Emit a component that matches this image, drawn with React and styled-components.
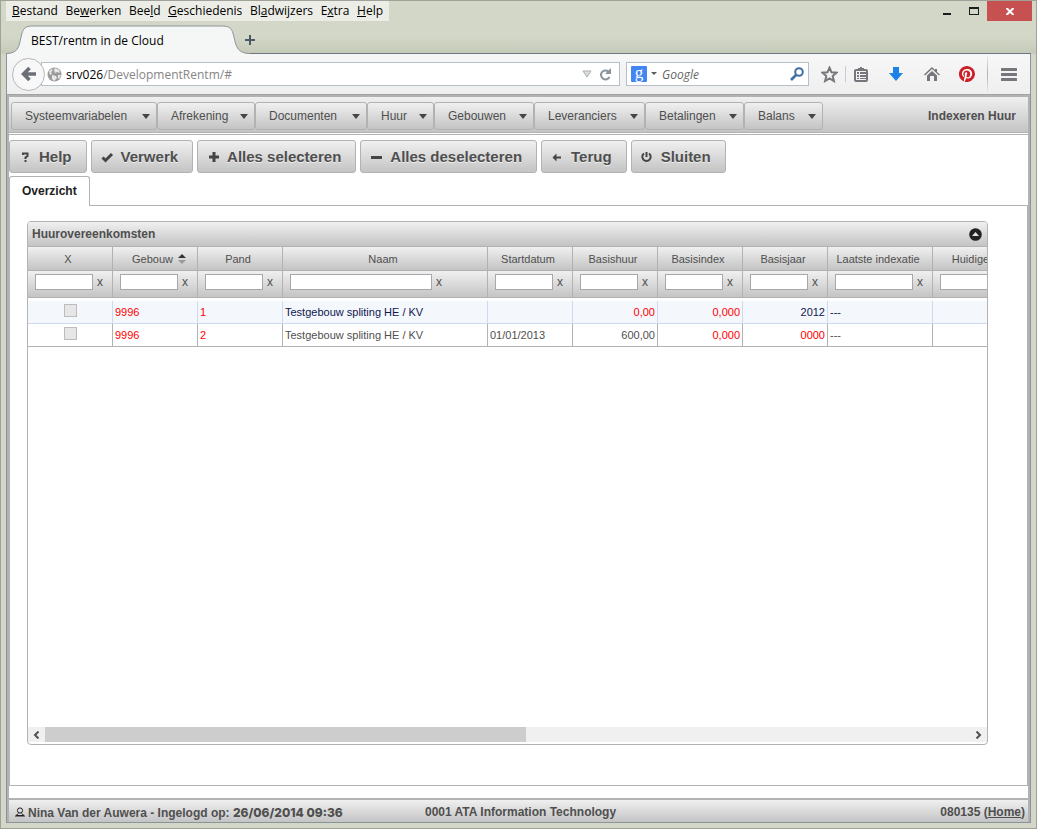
import React, { useState } from 'react'
import styled, { createGlobalStyle, css } from 'styled-components'

const GlobalStyle = createGlobalStyle`
  * {
    box-sizing: border-box;
  }

  body {
    margin: 0;
    background: #d3d7c7;
    font-family: "Liberation Sans", Arial, sans-serif;
    font-size: 11px;
    color: #4f4f4f;
  }

  button,
  input {
    font: inherit;
    color: inherit;
  }
`

const chromeFont = css`
  font-family: "Open Sans", "Noto Sans", sans-serif;
  font-size: 12px;
  color: #000;
`

const metal = css`
  background: linear-gradient(#f0f0f0, #c4c4c4);
`

/* browser window */

const BrowserWindow = styled.div`
  display: flex;
  flex-direction: column;
  min-height: 100vh;
  padding: 0 4px 5px 5px;
  border: 1px solid #a0a297;
  background: linear-gradient(#d3d7c7 36px, #c6cab9 52px, #d3d7c7 54px);
`

const TitleBar = styled.div`
  display: flex;
  align-items: flex-start;
  justify-content: space-between;
  height: 24px;
`

const MenuBar = styled.nav`
  ${chromeFont}
  display: flex;
  justify-content: space-between;
  width: 383px;
  height: 20px;
  padding: 0 6px;
  background: #ecede6;
`

const MenuBarItem = styled.button`
  padding: 0;
  border: 0;
  background: none;
  line-height: 20px;
`

const WindowControls = styled.div`
  display: flex;
  height: 20px;
`

const WindowButton = styled.button`
  display: flex;
  align-items: center;
  justify-content: center;
  width: ${props => (props.$close ? 45 : 27)}px;
  padding: 0;
  border: 0;
  background: ${props => (props.$close ? '#c75050' : 'none')};
`

const TabStrip = styled.div`
  display: flex;
  height: 29px;
  margin-right: 1px;
  border-bottom: 1px solid #6b7a83;
`

const BrowserTab = styled.button`
  ${chromeFont}
  position: relative;
  width: 244px;
  height: 29px;
  padding: 2px 25px 0;
  border: 0;
  background: none;
  text-align: left;

  svg {
    position: absolute;
    top: 0;
    left: 0;
  }

  span {
    position: relative;
  }
`

const NewTab = styled.button`
  width: 16px;
  margin-left: -8px;
  padding: 4px 0 0;
  border: 0;
  background: none;
`

const BrowserBody = styled.div`
  display: flex;
  flex: 1;
  flex-direction: column;
  margin-right: 1px;
  border: 1px solid #8a9499;
  border-top: 0;
  background: #fff;
`

const NavBar = styled.div`
  display: flex;
  align-items: center;
  height: 41px;
  padding: 0 1px 0 5px;
  border-bottom: 1px solid #a3a3a3;
  background: linear-gradient(#f7f7f7, #efefef);
`

const BackButton = styled.button`
  z-index: 1;
  display: flex;
  align-items: center;
  justify-content: center;
  width: 33px;
  height: 33px;
  padding: 0;
  border: 1px solid #b3b8bc;
  border-radius: 50%;
  background: #f8f8f8;
`

const Field = styled.div`
  ${chromeFont}
  display: flex;
  align-items: center;
  height: 24px;
  border: 1px solid #b4bfc6;
  background: #fff;

  input {
    flex: 1;
    min-width: 0;
    padding: 0;
    border: 0;
    outline: 0;
    background: none;
    color: #858585;
  }
`

const AddressField = styled(Field)`
  flex: 1;
  margin-left: -4px;
  padding: 0 0 0 5px;

  svg:first-child {
    margin-right: 4px;
  }
`

const SearchField = styled(Field)`
  width: 183px;
  margin: 0 5px 0 6px;
  padding: 0 4px;

  input {
    margin-left: 3px;
    color: #666;
    font-style: italic;
  }

  input::placeholder {
    color: #666;
    opacity: 1;
  }
`

const PlainButton = styled.button`
  display: flex;
  align-items: center;
  justify-content: center;
  padding: 0;
  border: 0;
  background: none;
`

const NavTools = styled.div`
  display: flex;
  align-items: center;
`

const ToolButton = styled(PlainButton)`
  width: ${props => props.$width || 36}px;
  height: 24px;
`

const Separator = styled.span`
  width: 1px;
  height: ${props => (props.$tall ? 36 : 16)}px;
  background: ${props =>
    props.$tall ? 'linear-gradient(#e8eaeb, #a9b3b9, #e8eaeb)' : '#c4ccd1'};
`

/* application */

const Page = styled.div`
  display: flex;
  flex: 1;
  flex-direction: column;
  border: 2px solid #b2b2b2;
  border-bottom: 0;
`

const AppHeader = styled.header`
  ${metal}
  display: flex;
  align-items: center;
  justify-content: space-between;
  height: 36px;
  padding: 3px 12px 0 2px;
  border-bottom: 1px solid #b2b2b2;
  font-size: 12px;
`

const AppMenu = styled.nav`
  display: flex;
`

const AppMenuItem = styled.button`
  ${metal}
  display: flex;
  align-items: center;
  justify-content: space-between;
  width: ${props => props.$width}px;
  height: 28px;
  padding: 0 6px 0 13px;
  border: 1px solid #b2b2b2;
  border-radius: 3px;
`

const PageTitle = styled.h1`
  margin: 0;
  font-size: 12px;
`

const Main = styled.main`
  display: flex;
  flex: 1;
  flex-direction: column;
  margin-top: 1px;
  border-top: 1px solid #b2b2b2;
`

const Toolbar = styled.div`
  display: flex;
  gap: 4px;
  padding: 5px 0 3px;
`

const ToolbarButton = styled.button`
  ${metal}
  display: flex;
  align-items: center;
  gap: 7px;
  height: 33px;
  padding: 0 14px 0 8px;
  border: 1px solid #b2b2b2;
  border-radius: 3px;
  font-size: 15px;
  font-weight: bold;
  text-shadow: 0 1px 0 #eee;
`

const Tabs = styled.div`
  display: flex;
  height: 30px;
  border-bottom: 1px solid #b2b2b2;
`

const Tab = styled.button`
  height: 30px;
  padding: 0 12px 2px;
  border: 1px solid #b2b2b2;
  border-bottom: 0;
  border-radius: 3px 3px 0 0;
  background: #fff;
  color: #212121;
  font-size: 12px;
  font-weight: bold;
`

const TabPanel = styled.section`
  display: flex;
  flex: 1;
  flex-direction: column;
  padding: 15px 39px 40px 17px;
  border: 1px solid #b2b2b2;
  border-top: 0;
`

const GridPanel = styled.div`
  display: flex;
  flex: 1;
  flex-direction: column;
  overflow: hidden;
  border: 1px solid #b2b2b2;
  border-radius: 4px;
`

const GridTitle = styled.div`
  ${metal}
  display: flex;
  align-items: center;
  justify-content: space-between;
  height: 25px;
  padding: 0 5px 0 4px;
  border-bottom: 1px solid #b2b2b2;

  h2 {
    margin: 0;
    font-size: 12px;
  }
`

const GridViewport = styled.div`
  flex: 1;
  overflow: hidden;
`

const Table = styled.table`
  width: 1010px;
  border-collapse: separate;
  border-spacing: 0;
  table-layout: fixed;
`

const HeadCell = styled.th`
  ${metal}
  height: 24px;
  padding: 0 4px 0 0;
  border: solid #b2b2b2;
  border-width: 0 1px 1px 0;
  font-weight: normal;
`

const HeadLabel = styled.span`
  display: flex;
  align-items: center;
  justify-content: center;
  gap: 5px;
  padding-left: ${props => (props.$sorted ? 12 : 0)}px;
  white-space: nowrap;
`

const FilterCell = styled.td`
  ${metal}
  height: 27px;
  padding: 0 5px 4px 7px;
  border: solid #b2b2b2;
  border-width: 0 1px 1px 0;
`

const Filter = styled.div`
  display: flex;
  align-items: center;

  input {
    width: ${props => props.$width}px;
    height: 16px;
    padding: 0 2px;
    border: 1px solid #a6a6ac;
    background: #fff;
  }

  button {
    width: 14px;
    padding: 0;
    border: 0;
    background: none;
    font-size: 12px;
    line-height: 16px;
  }
`

const BodyRow = styled.tr`
  td {
    height: 23px;
    padding: 0 2px;
    border: solid ${props => (props.$active ? '#cfdaf0' : '#b2b2b2')};
    border-width: 0 1px 1px 0;
    background: ${props => (props.$active ? '#f4f8fd' : '#fff')};
    color: ${props => (props.$active ? '#0f1650' : '#4f4f4f')};
    white-space: nowrap;
  }
`

const Value = styled.div`
  color: ${props => (props.$alert ? '#f00' : 'inherit')};
  text-align: ${props => props.$align || 'left'};
`

const Checkbox = styled.input.attrs({ type: 'checkbox' })`
  display: block;
  appearance: none;
  width: 13px;
  height: 13px;
  margin: 0 auto 4px;
  border: 1px solid #bcbcbc;
  background: #e6e6e6;
`

const Spacer = styled.tbody`
  td {
    height: 3px;
    padding: 0;
  }
`

const ScrollBar = styled.div`
  display: flex;
  height: 15px;
  margin-bottom: 2px;
  background: #f0f0f0;
`

const ScrollTrack = styled.div`
  flex: 1;
`

const ScrollThumb = styled.div`
  width: 52%;
  height: 15px;
  background: #cdcdcd;
`

const ScrollButton = styled(PlainButton)`
  width: 17px;
`

const StatusBar = styled.footer`
  ${metal}
  display: grid;
  grid-template-columns: 410px 1fr auto;
  align-items: center;
  height: 24px;
  margin-top: 12px;
  padding: 2px 3px 0 6px;
  border-top: 2px solid #b2b2b2;
  font-size: 12px;
  font-weight: bold;

  a {
    color: inherit;
  }
`

const User = styled.span`
  display: flex;
  align-items: center;
  gap: 3px;
  white-space: pre;
`

const LoginTime = styled.time`
  font-family: Inter, sans-serif;
  font-weight: 800;
`

const Caret = () => (
  <svg width="8" height="5" viewBox="0 0 8 5">
    <path d="M0 0h8L4 5z" fill="#454545" />
  </svg>
)

const toolbarIcons = {
  help: (
    <path
      d="M5 6V4.500h4.500V7L7.500 8.500V10M7.500 11v2"
      fill="none"
      stroke="#454545"
      strokeWidth="2"
    />
  ),
  check: <path d="M2.500 8.500l3 3 6.500-6.500" fill="none" stroke="#454545" strokeWidth="3" />,
  plus: <path d="M8 3v10M3 8h10" fill="none" stroke="#454545" strokeWidth="3" />,
  minus: <path d="M2 8.500h11" fill="none" stroke="#454545" strokeWidth="3" />,
  back: <path d="M6.500 4.500L2.500 8.500l4 4V9.500H11v-2H6.500z" fill="#454545" />,
  power: (
    <path d="M4 4.500a4.200 4.200 0 1 0 5 0M6.500 3v5" fill="none" stroke="#454545" strokeWidth="2" />
  ),
}

const ToolbarIcon = ({ name }) => (
  <svg width="14" height="16" viewBox="0 0 14 16">
    {toolbarIcons[name]}
  </svg>
)

const menuBarItems = [
  ['', 'B', 'estand'],
  ['Be', 'w', 'erken'],
  ['Bee', 'l', 'd'],
  ['', 'G', 'eschiedenis'],
  ['Bl', 'a', 'dwijzers'],
  ['E', 'x', 'tra'],
  ['', 'H', 'elp'],
]

const appMenuItems = [
  { label: 'Systeemvariabelen', width: 146 },
  { label: 'Afrekening', width: 98 },
  { label: 'Documenten', width: 112 },
  { label: 'Huur', width: 67 },
  { label: 'Gebouwen', width: 100 },
  { label: 'Leveranciers', width: 111 },
  { label: 'Betalingen', width: 99 },
  { label: 'Balans', width: 79 },
]

const actions = [
  { label: 'Help', icon: 'help' },
  { label: 'Verwerk', icon: 'check' },
  { label: 'Alles selecteren', icon: 'plus' },
  { label: 'Alles deselecteren', icon: 'minus' },
  { label: 'Terug', icon: 'back' },
  { label: 'Sluiten', icon: 'power' },
]

const columns = [
  { key: 'x', label: 'X', width: 85 },
  { key: 'gebouw', label: 'Gebouw', width: 85, sorted: true },
  { key: 'pand', label: 'Pand', width: 85 },
  { key: 'naam', label: 'Naam', width: 205, filter: 142 },
  { key: 'start', label: 'Startdatum', width: 85 },
  { key: 'huur', label: 'Basishuur', width: 85, align: 'right' },
  { key: 'index', label: 'Basisindex', width: 85, align: 'right' },
  { key: 'jaar', label: 'Basisjaar', width: 85, align: 'right' },
  { key: 'laatste', label: 'Laatste indexatie', width: 105, filter: 78 },
  { key: 'huidige', label: 'Huidige huur', width: 105, filter: 78 },
]

const rows = [
  {
    gebouw: '9996',
    pand: '1',
    naam: 'Testgebouw spliting HE / KV',
    start: '',
    huur: '0,00',
    index: '0,000',
    jaar: '2012',
    laatste: '---',
    alerts: ['gebouw', 'pand', 'huur', 'index'],
  },
  {
    gebouw: '9996',
    pand: '2',
    naam: 'Testgebouw spliting HE / KV',
    start: '01/01/2013',
    huur: '600,00',
    index: '0,000',
    jaar: '0000',
    laatste: '---',
    alerts: ['gebouw', 'pand', 'index', 'jaar'],
  },
]

const Grid = () => {
  const [open, setOpen] = useState(true)

  return (
    <GridPanel>
      <GridTitle>
        <h2>Huurovereenkomsten</h2>
        <PlainButton aria-label="Inklappen" onClick={() => setOpen(!open)}>
          <svg width="13" height="13" viewBox="0 0 13 13">
            <circle cx="6.500" cy="6.500" r="6.300" fill="#222" />
            <path d="M3 8l3.500-4L10 8z" fill="#e4e4e4" />
          </svg>
        </PlainButton>
      </GridTitle>
      <GridViewport>
        {open && (
          <Table>
            <colgroup>
              {columns.map(col => (
                <col key={col.key} style={{ width: col.width }} />
              ))}
            </colgroup>
            <thead>
              <tr>
                {columns.map(col => (
                  <HeadCell key={col.key} scope="col">
                    <HeadLabel $sorted={col.sorted}>
                      {col.label}
                      {col.sorted && (
                        <svg width="8" height="10" viewBox="0 0 8 10">
                          <path d="M0 4l4-4 4 4z" fill="#333" />
                          <path d="M0 6h8l-4 4z" fill="#999" />
                        </svg>
                      )}
                    </HeadLabel>
                  </HeadCell>
                ))}
              </tr>
              <tr>
                {columns.map(col => (
                  <FilterCell key={col.key}>
                    <Filter $width={col.filter || 58}>
                      <input type="text" aria-label={`Filter ${col.label}`} />
                      <button aria-label={`Wis ${col.label}`}>x</button>
                    </Filter>
                  </FilterCell>
                ))}
              </tr>
            </thead>
            <Spacer>
              <tr>
                <td colSpan={columns.length} />
              </tr>
            </Spacer>
            <tbody>
              {rows.map((row, i) => (
                <BodyRow key={row.pand} $active={i === 0}>
                  {columns.map(col => (
                    <td key={col.key}>
                      {col.key === 'x' ? (
                        <Checkbox aria-label={`Selecteer pand ${row.pand}`} />
                      ) : (
                        <Value $align={col.align} $alert={row.alerts.includes(col.key)}>
                          {row[col.key]}
                        </Value>
                      )}
                    </td>
                  ))}
                </BodyRow>
              ))}
            </tbody>
          </Table>
        )}
      </GridViewport>
      <ScrollBar>
        <ScrollButton aria-label="Naar links">
          <svg width="7" height="8" viewBox="0 0 7 8">
            <path d="M5.500 0.500L2 4l3.500 3.500" fill="none" stroke="#505050" strokeWidth="2" />
          </svg>
        </ScrollButton>
        <ScrollTrack>
          <ScrollThumb />
        </ScrollTrack>
        <ScrollButton aria-label="Naar rechts">
          <svg width="7" height="8" viewBox="0 0 7 8">
            <path d="M1.500 0.500L5 4 1.500 7.500" fill="none" stroke="#505050" strokeWidth="2" />
          </svg>
        </ScrollButton>
      </ScrollBar>
    </GridPanel>
  )
}

const BrowserChrome = () => (
  <>
    <TitleBar>
      <MenuBar>
        {menuBarItems.map(([before, key, after]) => (
          <MenuBarItem key={before + key + after}>
            {before}
            <u>{key}</u>
            {after}
          </MenuBarItem>
        ))}
      </MenuBar>
      <WindowControls>
        <WindowButton aria-label="Minimaliseren">
          <svg width="10" height="10" viewBox="0 0 10 10">
            <path d="M1 7h8v2H1z" fill="#1b1b1b" />
          </svg>
        </WindowButton>
        <WindowButton aria-label="Maximaliseren">
          <svg width="10" height="8" viewBox="0 0 10 8">
            <path d="M0 0h10v8H0zM1 2v5h8V2z" fill="#1b1b1b" fillRule="evenodd" />
          </svg>
        </WindowButton>
        <WindowButton $close aria-label="Sluiten">
          <svg width="8" height="7" viewBox="0 0 8 7">
            <path d="M.5 0l7 7M7.500 0l-7 7" stroke="#fff" strokeWidth="2" />
          </svg>
        </WindowButton>
      </WindowControls>
    </TitleBar>
    <TabStrip>
      <BrowserTab>
        <svg width="244" height="29" viewBox="0 0 244 29">
          <path
            d="M0 28.500C12 28.500 13 22 15 12C17 3 19 1 27 1H215C224 1 226 3 228 12C230 22 232 28.500 244 28.500V29H0z"
            fill="#f5f6f6"
          />
          <path
            d="M0 28.500C12 28.500 13 22 15 12C17 3 19 1 27 1H215C224 1 226 3 228 12C230 22 232 28.500 244 28.500"
            fill="none"
            stroke="#8d969a"
          />
        </svg>
        <span>BEST/rentm in de Cloud</span>
      </BrowserTab>
      <NewTab aria-label="Nieuw tabblad">
        <svg width="10" height="10" viewBox="0 0 10 10">
          <path d="M5 0v10M0 5h10" stroke="#4a5a66" strokeWidth="2" />
        </svg>
      </NewTab>
    </TabStrip>
  </>
)

const Navigation = () => (
  <NavBar>
    <BackButton aria-label="Terug">
      <svg width="16" height="16" viewBox="0 0 16 16">
        <path d="M8.500 2L2.500 8l6 6M3 8h12" fill="none" stroke="#6b7078" strokeWidth="3.600" />
      </svg>
    </BackButton>
    <AddressField>
      <svg width="15" height="15" viewBox="0 0 15 15">
        <circle cx="7.500" cy="7.500" r="7" fill="#9b9b9b" />
        <path d="M2 4l3-2 1 1-2 2 1 2-2 1zM8 1l4 2 1 3-3-1-2 1-1-3zM5 8l4 1 1 2-3 3-2-2zM11 8l3 0-2 4-1-1z" fill="#e8e8e8" />
      </svg>
      <span>srv026</span>
      <input type="text" aria-label="Adres" defaultValue="/DevelopmentRentm/#" />
      <PlainButton aria-label="Geschiedenis tonen">
        <svg width="10" height="8" viewBox="0 0 10 8">
          <path d="M1 1h8L5 7z" fill="#d9dde0" stroke="#a7afb5" />
        </svg>
      </PlainButton>
      <ToolButton $width={23} aria-label="Vernieuwen">
        <svg width="13" height="13" viewBox="0 0 13 13">
          <path d="M9.500 3.500A4.500 4.500 0 1 0 10.500 9" fill="none" stroke="#8a949c" strokeWidth="2" />
          <path d="M12 0v6H6z" fill="#8a949c" />
        </svg>
      </ToolButton>
    </AddressField>
    <SearchField>
      <svg width="16" height="16" viewBox="0 0 16 16">
        <rect width="16" height="16" rx="1" fill="#4285f4" />
        <text x="8" y="12" fill="#fff" fontFamily="Liberation Serif" fontSize="17" textAnchor="middle">
          g
        </text>
      </svg>
      <svg width="12" height="4" viewBox="0 0 12 4">
        <path d="M4 0h6L7 3z" fill="#5c5c5c" />
      </svg>
      <input type="text" aria-label="Zoeken" placeholder="Google" />
      <PlainButton aria-label="Zoek">
        <svg width="14" height="14" viewBox="0 0 14 14">
          <circle cx="9" cy="5" r="3.800" fill="none" stroke="#3f6fa5" strokeWidth="2" />
          <path d="M6 8l-5 5" stroke="#3f6fa5" strokeWidth="2.600" />
        </svg>
      </PlainButton>
    </SearchField>
    <NavTools>
      <ToolButton $width={31} aria-label="Bladwijzer maken">
        <svg width="17" height="17" viewBox="0 0 17 17">
          <path
            d="M8.500 1.600l2 4.700 5 .4-3.800 3.300 1.200 5-4.400-2.700L4.100 15l1.200-5L1.500 6.700l5-.4z"
            fill="none"
            stroke="#75777c"
            strokeWidth="2"
          />
        </svg>
      </ToolButton>
      <Separator />
      <ToolButton $width={29} aria-label="Bladwijzers">
        <svg width="14" height="15" viewBox="0 0 14 15">
          <rect x="1" y="3" width="12" height="11" rx="1" fill="none" stroke="#75777c" strokeWidth="2" />
          <path d="M4 1h2V0h2v1h2v3H4zM3 5h2v2H3zM6 5h6v2H6zM3 8h2v2H3zM6 8h6v2H6zM3 11h2v1H3zM6 11h6v1H6z" fill="#75777c" />
        </svg>
      </ToolButton>
      <ToolButton $width={42} aria-label="Downloads">
        <svg width="14" height="14" viewBox="0 0 14 14">
          <path d="M4 0h6v6h4l-7 8-7-8h4z" fill="#1b82e8" />
        </svg>
      </ToolButton>
      <ToolButton $width={29} aria-label="Startpagina">
        <svg width="16" height="15" viewBox="0 0 16 15">
          <path d="M8 0L0 7.500l1 1 7-6.500 7 6.500 1-1L13 5V2h-2v1z" fill="#75777c" />
          <path d="M3 8.500L8 4l5 4.500V14h-3v-5H6v5H3z" fill="#75777c" />
        </svg>
      </ToolButton>
      <ToolButton $width={41} aria-label="Pinterest">
        <svg width="16" height="16" viewBox="0 0 24 24">
          <circle cx="12" cy="12" r="11" fill="#fff" />
          <path
            d="M12 0a12 12 0 0 0-4.400 23.200c-.1-.9-.2-2.400 0-3.400l1.400-6s-.4-.7-.4-1.700c0-1.700 1-2.900 2.200-2.900 1 0 1.500.8 1.500 1.700 0 1-.7 2.600-1 4-.3 1.200.6 2.200 1.800 2.200 2.100 0 3.800-2.200 3.800-5.500 0-2.900-2.100-4.900-5-4.900-3.400 0-5.400 2.600-5.400 5.200 0 1 .4 2.100.9 2.700.1.100.1.200.1.300l-.3 1.400c-.1.200-.2.300-.4.200-1.500-.7-2.400-2.900-2.400-4.700 0-3.800 2.800-7.300 7.900-7.300 4.200 0 7.400 3 7.400 6.900 0 4.100-2.600 7.500-6.200 7.500-1.200 0-2.400-.6-2.800-1.400l-.7 2.900c-.3 1-1 2.300-1.500 3.100A12 12 0 1 0 12 0z"
            fill="#cb2027"
          />
        </svg>
      </ToolButton>
      <Separator $tall />
      <ToolButton $width={41} aria-label="Menu">
        <svg width="16" height="13" viewBox="0 0 16 13">
          <path d="M1 1.500h14M1 6.500h14M1 11.500h14" stroke="#75777c" strokeWidth="3" strokeLinecap="round" />
        </svg>
      </ToolButton>
    </NavTools>
  </NavBar>
)

const App = () => (
  <BrowserWindow>
    <GlobalStyle />
    <BrowserChrome />
    <BrowserBody>
      <Navigation />
      <Page>
        <AppHeader>
          <AppMenu>
            {appMenuItems.map(item => (
              <AppMenuItem key={item.label} $width={item.width}>
                {item.label}
                <Caret />
              </AppMenuItem>
            ))}
          </AppMenu>
          <PageTitle>Indexeren Huur</PageTitle>
        </AppHeader>
        <Main>
          <Toolbar>
            {actions.map(action => (
              <ToolbarButton key={action.label}>
                <ToolbarIcon name={action.icon} />
                {action.label}
              </ToolbarButton>
            ))}
          </Toolbar>
          <Tabs role="tablist">
            <Tab role="tab" aria-selected="true">Overzicht</Tab>
          </Tabs>
          <TabPanel>
            <Grid />
          </TabPanel>
        </Main>
        <StatusBar>
          <User>
            <svg width="10" height="10" viewBox="0 0 10 10">
              <circle cx="5" cy="3.500" r="2.600" fill="none" stroke="#222" />
              <path d="M3.500 6.500L1 8.500h8L6.500 6.500M0 9h10" fill="none" stroke="#222" />
            </svg>
            <span>
              Nina Van der Auwera - Ingelogd op: <LoginTime>26/06/2014 09:36</LoginTime>
            </span>
          </User>
          <span>0001 ATA Information Technology</span>
          <span>
            080135 (<a href="#home">Home</a>)
          </span>
        </StatusBar>
      </Page>
    </BrowserBody>
  </BrowserWindow>
)

export default App
